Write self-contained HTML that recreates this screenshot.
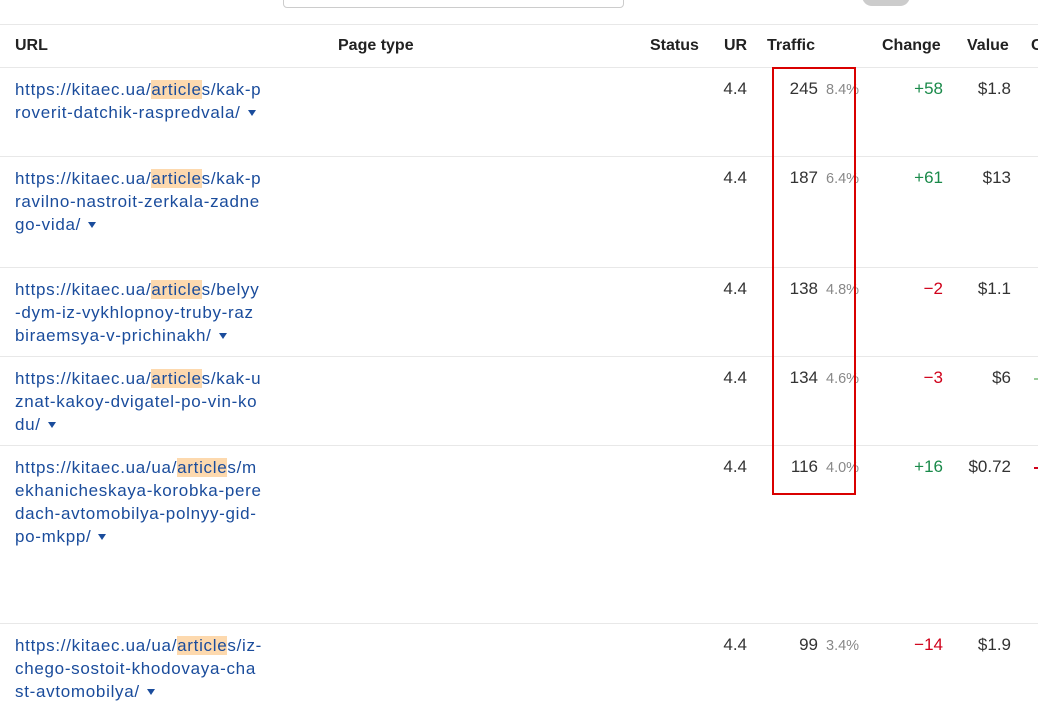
<!DOCTYPE html>
<html><head><meta charset="utf-8"><style>
*{margin:0;padding:0;box-sizing:border-box}
body{width:1038px;height:699px;overflow:hidden;background:#fff;font-family:"Liberation Sans",sans-serif;position:relative;color:#333}
.a{position:absolute;white-space:nowrap}
.hl{position:absolute;left:0;right:0;height:1px;background:#e8e8e8}
.th{font-weight:bold;font-size:16px;color:#222;top:37px;letter-spacing:0}
.u{font-size:17px;color:#1a4c9c;left:15px;line-height:23px;letter-spacing:0.7px}
.u b{font-weight:normal;background:#fdd9ae}
.tri{display:inline-block;width:0;height:0;border-left:4.5px solid transparent;border-right:4.5px solid transparent;border-top:6px solid #1a4c9c;margin-left:7px;vertical-align:2px}
.n{font-size:17px;text-align:right;width:60px}
.p{font-size:14.5px;color:#888}
.g{color:#1a8a4a}.r{color:#d0021b}
</style></head><body>
<div class="a" style="left:283px;top:-10px;width:341px;height:18px;border:1px solid #ccc;border-radius:4px"></div>
<div class="a" style="left:862px;top:-14px;width:48px;height:20px;border-radius:10px;background:#ccc"></div>
<div class="hl" style="top:24px"></div>
<div class="a th" style="left:15px">URL</div>
<div class="a th" style="left:338px">Page type</div>
<div class="a th" style="left:650px">Status</div>
<div class="a th" style="left:724px">UR</div>
<div class="a th" style="left:767px">Traffic</div>
<div class="a th" style="left:882px">Change</div>
<div class="a th" style="left:967px">Value</div>
<div class="a th" style="left:1031px">C</div>
<div class="hl" style="top:67px"></div>
<div class="hl" style="top:156px"></div>
<div class="hl" style="top:267px"></div>
<div class="hl" style="top:356px"></div>
<div class="hl" style="top:445px"></div>
<div class="hl" style="top:623px"></div>

<div class="a u" style="top:78px">https://kitaec.ua/<b>article</b>s/kak-p<br>roverit-datchik-raspredvala/<span class="tri"></span></div>
<div class="a u" style="top:167px">https://kitaec.ua/<b>article</b>s/kak-p<br>ravilno-nastroit-zerkala-zadne<br>go-vida/<span class="tri"></span></div>
<div class="a u" style="top:278px">https://kitaec.ua/<b>article</b>s/belyy<br>-dym-iz-vykhlopnoy-truby-raz<br>biraemsya-v-prichinakh/<span class="tri"></span></div>
<div class="a u" style="top:367px">https://kitaec.ua/<b>article</b>s/kak-u<br>znat-kakoy-dvigatel-po-vin-ko<br>du/<span class="tri"></span></div>
<div class="a u" style="top:456px">https://kitaec.ua/ua/<b>article</b>s/m<br>ekhanicheskaya-korobka-pere<br>dach-avtomobilya-polnyy-gid-<br>po-mkpp/<span class="tri"></span></div>
<div class="a u" style="top:634px">https://kitaec.ua/ua/<b>article</b>s/iz-<br>chego-sostoit-khodovaya-cha<br>st-avtomobilya/<span class="tri"></span></div>

<div class="a n" style="left:687px;top:79px">4.4</div><div class="a n" style="left:758px;top:79px">245</div><div class="a p" style="left:826px;top:82px">8.4%</div><div class="a n g" style="left:883px;top:79px">+58</div><div class="a n" style="left:951px;top:79px">$1.8</div>
<div class="a n" style="left:687px;top:168px">4.4</div><div class="a n" style="left:758px;top:168px">187</div><div class="a p" style="left:826px;top:171px">6.4%</div><div class="a n g" style="left:883px;top:168px">+61</div><div class="a n" style="left:951px;top:168px">$13</div>
<div class="a n" style="left:687px;top:279px">4.4</div><div class="a n" style="left:758px;top:279px">138</div><div class="a p" style="left:826px;top:282px">4.8%</div><div class="a n r" style="left:883px;top:279px">−2</div><div class="a n" style="left:951px;top:279px">$1.1</div>
<div class="a n" style="left:687px;top:368px">4.4</div><div class="a n" style="left:758px;top:368px">134</div><div class="a p" style="left:826px;top:371px">4.6%</div><div class="a n r" style="left:883px;top:368px">−3</div><div class="a n" style="left:951px;top:368px">$6</div>
<div class="a n" style="left:687px;top:457px">4.4</div><div class="a n" style="left:758px;top:457px">116</div><div class="a p" style="left:826px;top:460px">4.0%</div><div class="a n g" style="left:883px;top:457px">+16</div><div class="a n" style="left:951px;top:457px">$0.72</div>
<div class="a n" style="left:687px;top:635px">4.4</div><div class="a n" style="left:758px;top:635px">99</div><div class="a p" style="left:826px;top:638px">3.4%</div><div class="a n r" style="left:883px;top:635px">−14</div><div class="a n" style="left:951px;top:635px">$1.9</div>
<div class="a" style="left:1034px;top:378px;width:4px;height:2px;background:#9c9"></div>
<div class="a" style="left:1034px;top:467px;width:4px;height:2px;background:#d0021b"></div>

<div class="a" style="left:772px;top:67px;width:84px;height:428px;border:2px solid #d90000"></div>
</body></html>
